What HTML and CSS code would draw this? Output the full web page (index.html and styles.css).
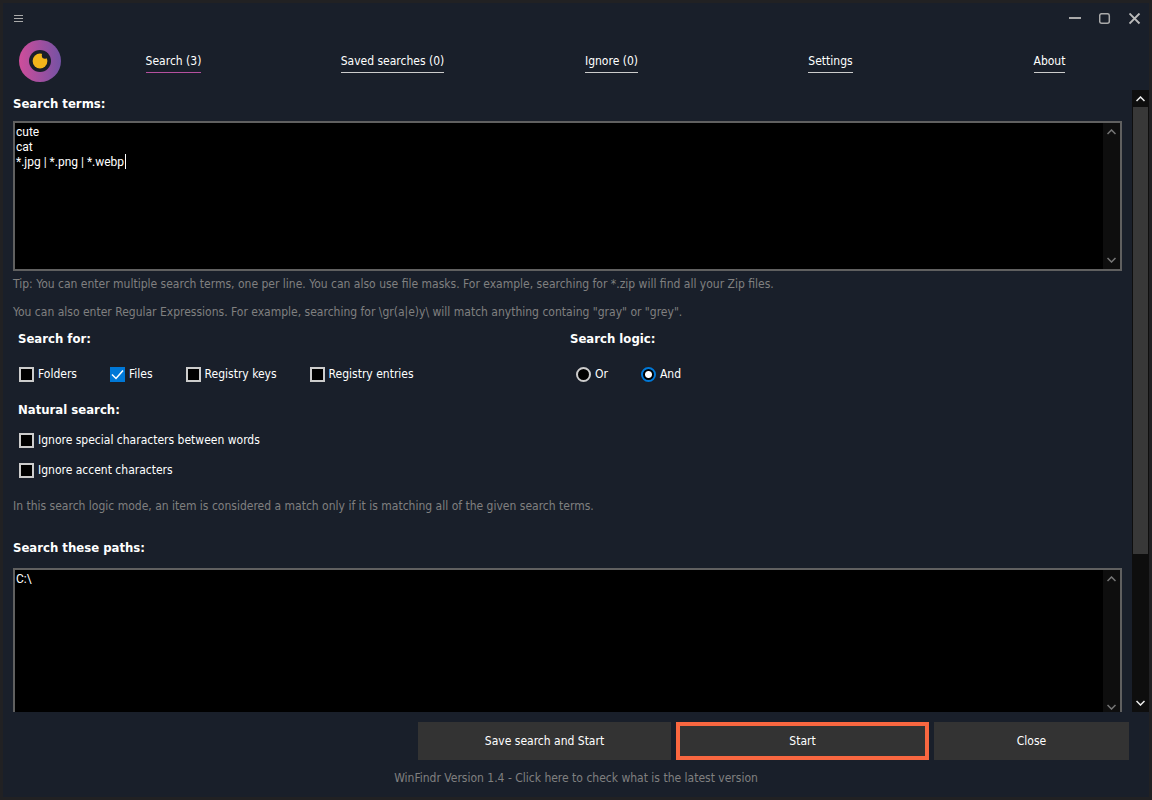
FILE: index.html
```html
<!DOCTYPE html>
<html lang="en">
    <head>
        <meta charset="UTF-8">
        <meta name="viewport" content="width=device-width, initial-scale=1.0">
        <link rel="stylesheet" href="styles.css">
        <title>WinFindr</title>
    </head>
    <body>
        <div class="window">
            <div class="titlebar">
                <button class="icon-button" aria-label="Menu">
                    <svg width="10" height="8" viewBox="0 0 10 8"><path d="M0 .5h9M0 3.5h9M0 6.5h9" stroke="#aaa" /></svg>
                </button>
                <div class="window-buttons">
                    <button class="icon-button" aria-label="Minimize">
                        <svg width="12" height="12" viewBox="0 0 12 12"><path d="M0 5h12" stroke="#aaa" stroke-width="2" /></svg>
                    </button>
                    <button class="icon-button" aria-label="Maximize">
                        <svg width="12" height="12" viewBox="0 0 12 12"><rect x=".7" y=".7" width="9.6" height="9.6" rx="2" fill="none" stroke="#aaa" stroke-width="1.5" /></svg>
                    </button>
                    <button class="icon-button" aria-label="Close window">
                        <svg width="12" height="12" viewBox="0 0 12 12"><path d="M.5 .5l10 10M10.500 .5l-10 10" stroke="#bbb" stroke-width="1.9" /></svg>
                    </button>
                </div>
            </div>

            <header class="header">
                <svg class="logo" width="42" height="42" viewBox="0 0 42 42">
                    <defs>
                        <linearGradient id="ring" x1="0" y1="0" x2="1" y2="0">
                            <stop offset="0" stop-color="#cf4d9b" />
                            <stop offset="1" stop-color="#7452a4" />
                        </linearGradient>
                    </defs>
                    <circle cx="21" cy="21" r="21" fill="url(#ring)" />
                    <circle cx="21" cy="21" r="11" fill="#191f2a" />
                    <circle cx="21" cy="21" r="7.4" fill="#f3b61b" />
                    <circle cx="26" cy="15.500" r="3.2" fill="#191f2a" />
                </svg>
                <nav class="tabs">
                    <a href="#search" class="active">Search (3)</a>
                    <a href="#saved">Saved searches (0)</a>
                    <a href="#ignore">Ignore (0)</a>
                    <a href="#settings">Settings</a>
                    <a href="#about">About</a>
                </nav>
            </header>

            <div class="view">
                <main class="page">
                    <label class="heading" for="terms">Search terms:</label>
                    <div class="field">
                        <textarea id="terms" spellcheck="false">cute
cat
*.jpg | *.png | *.webp</textarea>
                        <span class="caret"></span>
                        <div class="scrollbar">
                            <svg width="9" height="6" viewBox="0 0 9 6"><path d="M.5 5l4-4 4 4" /></svg>
                            <svg width="9" height="6" viewBox="0 0 9 6"><path d="M.5 1l4 4 4-4" /></svg>
                        </div>
                    </div>
                    <p class="hint">Tip: You can enter multiple search terms, one per line. You can also use file masks. For example, searching for *.zip will find all your Zip files.</p>
                    <p class="hint">You can also enter Regular Expressions. For example, searching for \gr(a|e)y\ will match anything containg "gray" or "grey".</p>

                    <div class="groups">
                        <fieldset>
                            <legend>Search for:</legend>
                            <div class="options">
                                <label><input type="checkbox">Folders</label>
                                <label><input type="checkbox" checked>Files</label>
                                <label><input type="checkbox">Registry keys</label>
                                <label><input type="checkbox">Registry entries</label>
                            </div>
                        </fieldset>
                        <fieldset>
                            <legend>Search logic:</legend>
                            <div class="options logic">
                                <label><input type="radio" name="logic">Or</label>
                                <label><input type="radio" name="logic" checked>And</label>
                            </div>
                        </fieldset>
                        <fieldset>
                            <legend>Natural search:</legend>
                            <div class="options stacked">
                                <label><input type="checkbox">Ignore special characters between words</label>
                                <label><input type="checkbox">Ignore accent characters</label>
                            </div>
                        </fieldset>
                    </div>

                    <p class="hint mode">In this search logic mode, an item is considered a match only if it is matching all of the given search terms.</p>

                    <label class="heading" for="paths">Search these paths:</label>
                    <div class="field">
                        <textarea id="paths" spellcheck="false">C:\</textarea>
                        <div class="scrollbar">
                            <svg width="9" height="6" viewBox="0 0 9 6"><path d="M.5 5l4-4 4 4" /></svg>
                            <svg width="9" height="6" viewBox="0 0 9 6"><path d="M.5 1l4 4 4-4" /></svg>
                        </div>
                    </div>
                </main>
                <div class="scrollbar page-scrollbar">
                    <svg width="9" height="6" viewBox="0 0 9 6"><path d="M.5 5l4-4 4 4" /></svg>
                    <div class="track"><div class="thumb"></div></div>
                    <svg width="9" height="6" viewBox="0 0 9 6"><path d="M.5 1l4 4 4-4" /></svg>
                </div>
            </div>

            <footer class="footer">
                <div class="actions">
                    <button>Save search and Start</button>
                    <button class="primary">Start</button>
                    <button class="close">Close</button>
                </div>
                <a class="version" href="#version">WinFindr Version 1.4 - Click here to check what is the latest version</a>
            </footer>
        </div>
    </body>
</html>
```
FILE: styles.css
```css
* {
    box-sizing: border-box;
}

body {
    margin: 0;
    background: #191f2a;
    color: #fff;
    font-family: "DejaVu Sans Condensed", "DejaVu Sans", sans-serif;
    font-size: 12px;
    line-height: 16px;
}

button,
textarea {
    font: inherit;
    color: inherit;
}

p {
    margin: 0;
}

.window {
    display: flex;
    flex-direction: column;
    height: 100vh;
    border: 3px solid #212123;
}

.titlebar {
    display: flex;
    justify-content: space-between;
    align-items: center;
    height: 32px;
    padding: 0 8px 0 11px;
}

.icon-button {
    display: flex;
    padding: 0;
    border: 0;
    background: none;
}

.window-buttons {
    display: flex;
    gap: 18px;
}

.header {
    display: flex;
    align-items: center;
    height: 55px;
    padding: 0 0 3px 16px;
}

.logo {
    flex: none;
}

/* last column runs a little under the window edge */
.tabs {
    flex: 1;
    display: grid;
    grid-template-columns: repeat(5, 1fr);
    justify-items: center;
    margin: 0 -10px 0 3px;
}

.tabs a {
    padding: 4px 0 3px;
    border-bottom: 1px solid #ccc;
    color: #fff;
    text-decoration: none;
}

.tabs a.active {
    border-color: #b5509f;
}

.view {
    flex: 1;
    display: flex;
    min-height: 0;
}

.page {
    flex: 1;
    overflow: hidden;
    padding: 6px 10px 0;
}

.heading,
legend {
    display: block;
    padding: 0;
    font-size: 13px;
    font-weight: bold;
}

.heading {
    margin-bottom: 9px;
}

.field {
    position: relative;
    display: flex;
    height: 150px;
    margin-bottom: 5px;
    border: 2px solid #606060;
    background: #000;
}

.field textarea {
    flex: 1;
    padding: 2px 1px;
    border: 0;
    outline: 0;
    resize: none;
    background: #000;
    font-family: Roboto, sans-serif;
    line-height: 15px;
    overflow: hidden;
}

.caret {
    position: absolute;
    left: 110px;
    top: 31px;
    width: 1px;
    height: 15px;
    background: #fff;
}

.scrollbar {
    display: flex;
    flex-direction: column;
    justify-content: space-between;
    align-items: center;
    width: 17px;
    padding: 6px 0;
    background: #0e0e0e;
}

.scrollbar path {
    fill: none;
    stroke: #777;
    stroke-width: 1.5;
}

.page-scrollbar path {
    stroke: #eee;
}

.track {
    flex: 1;
    width: 15px;
    margin: 5px 0;
}

.thumb {
    height: 76%;
    background: #383838;
}

.hint {
    margin-bottom: 12px;
    color: #808080;
}

.groups {
    display: grid;
    grid-template-columns: 1fr 1fr;
    margin-top: -1px;
    padding-left: 5px;
}

fieldset {
    min-width: 0;
    margin: 0;
    padding: 0;
    border: 0;
}

.options {
    display: flex;
    gap: 33px;
    padding: 19px 0 20px 1px;
}

.logic {
    padding-left: 6px;
}

.options label {
    display: flex;
    align-items: center;
    gap: 4px;
}

.stacked {
    flex-direction: column;
    gap: 14px;
    padding: 14px 0 20px 1px;
}

.options input {
    appearance: none;
    width: 15px;
    height: 15px;
    margin: 0;
    border: 2px solid #ccc;
    background: #000;
}

.options input[type="checkbox"]:checked {
    border: 0;
    background: #0078d7 url("data:image/svg+xml,%3Csvg xmlns='http://www.w3.org/2000/svg' viewBox='0 0 15 15'%3E%3Cpath d='M2 7.5l4 4L13 3.5' fill='none' stroke='%23fff' stroke-width='1.5'/%3E%3C/svg%3E");
}

.options input[type="radio"] {
    border-radius: 50%;
}

.options input[type="radio"]:checked {
    border-color: #0078d7;
    background: radial-gradient(circle, #fff 3px, #000 4px);
}

.mode {
    margin-bottom: 26px;
}

.mode + .heading {
    margin-bottom: 12px;
}

.footer {
    display: flex;
    flex-direction: column;
    align-items: center;
    gap: 10px;
    padding: 10px 0 11px;
}

.actions {
    align-self: stretch;
    display: flex;
    justify-content: flex-end;
    gap: 5px;
    padding-right: 20px;
}

.actions button {
    width: 253px;
    height: 38px;
    padding: 0;
    border: 0;
    background: #333;
}

.actions .primary {
    border: 4px solid #f96740;
}

.actions .close {
    width: 195px;
}

.version {
    color: #808080;
    text-decoration: none;
}
```
